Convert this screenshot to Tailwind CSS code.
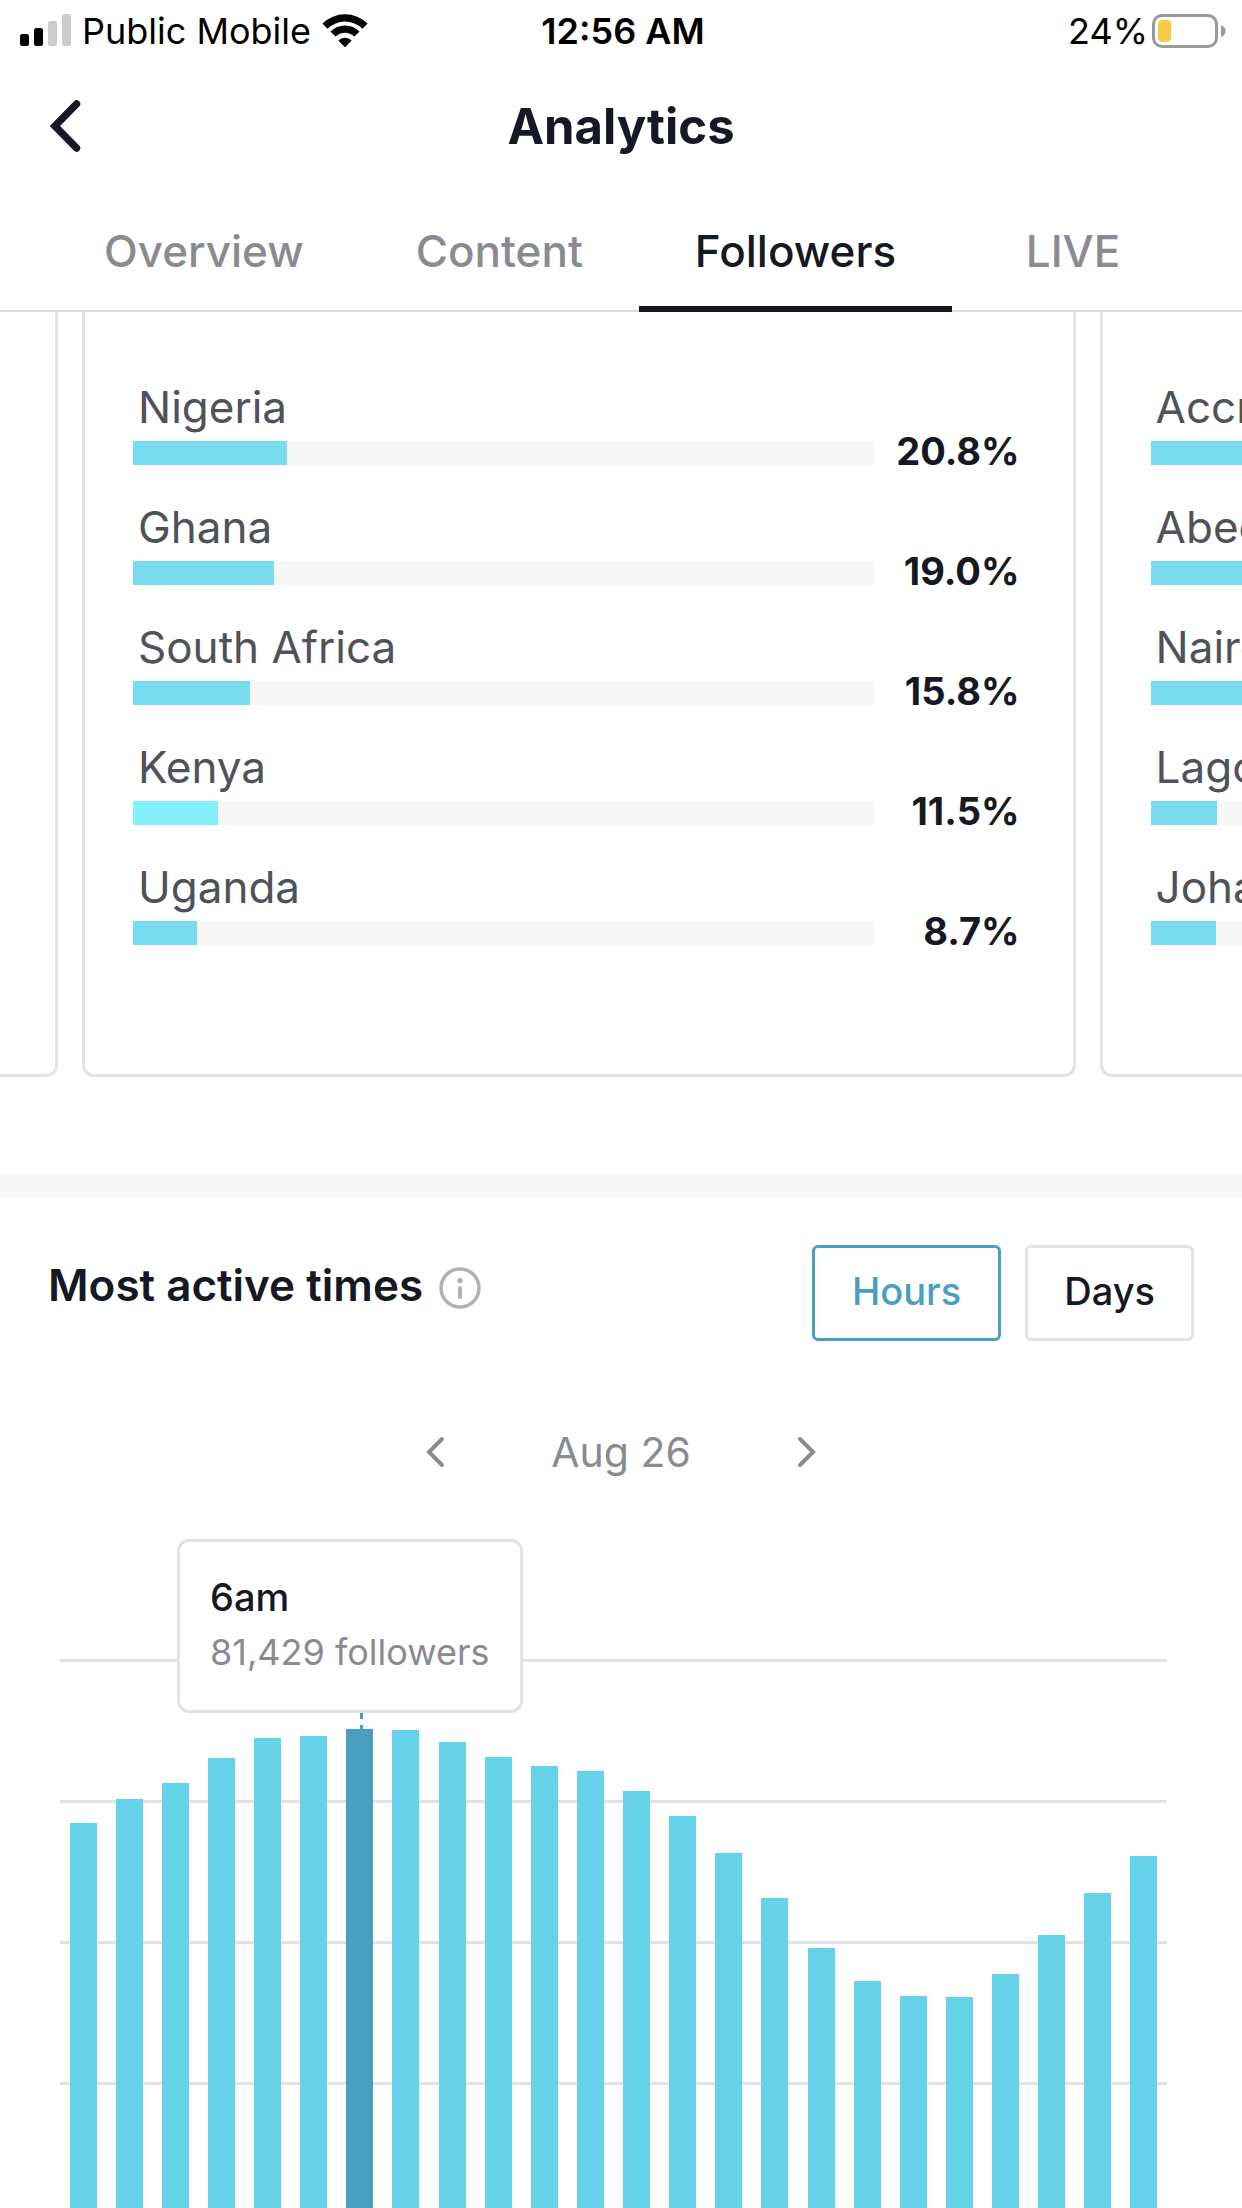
<!DOCTYPE html>
<html lang="en">
<head>
  <meta charset="UTF-8" />
  <meta name="viewport" content="width=device-width, initial-scale=1.0"/>
  <title>Analytics</title>
  <script src="https://cdn.jsdelivr.net/npm/@tailwindcss/browser@4"></script>
</head>
<body class="h-screen overflow-hidden bg-white font-['Inter',sans-serif] text-[#161823]">

  <!-- Status bar -->
  <div class="grid grid-cols-[1fr_auto_1fr] items-center h-[62px] pl-5 pr-4 text-4xl leading-none text-black">
    <div class="flex items-center gap-[11px]">
      <svg class="w-[51px] h-[34px]" viewBox="0 0 51 34">
        <rect x="0" y="20" width="9" height="12" rx="2.5"/>
        <rect x="14" y="14" width="9" height="18" rx="2.5"/>
        <rect x="28" y="7" width="9" height="25" rx="2.5" fill="#ccc"/>
        <rect x="42" y="0" width="9" height="32" rx="2.5" fill="#ccc"/>
      </svg>
      <span>Public Mobile</span>
      <svg class="w-[46px] h-[36px]" viewBox="0 0 46 36">
        <path d="M0.5 10.5 A32 32 0 0 1 45.5 10.5 L40.5 15.7 A25 25 0 0 0 5.5 15.7 Z"/>
        <path d="M8.5 18.5 A20.5 20.5 0 0 1 37.5 18.5 L32.4 23.6 A13.5 13.5 0 0 0 13.6 23.6 Z"/>
        <path d="M16.3 27.5 A9.5 9.5 0 0 1 29.7 27.5 L23.6 33.7 Q23 34.3 22.4 33.7 Z"/>
      </svg>
    </div>
    <div class="font-semibold">12:56 AM</div>
    <div class="flex items-center justify-end gap-1">
      <span>24%</span>
      <svg class="w-[74px] h-[34px]" viewBox="0 0 74 34">
        <rect x="1.5" y="1.5" width="63" height="31" rx="8.5" fill="none" stroke="#999" stroke-width="3"/>
        <rect x="6" y="6" width="13" height="22" rx="4" fill="#f6ce46"/>
        <path d="M69 11 Q73.500 13 73.500 17 Q73.500 21 69 23 Z" fill="#999"/>
      </svg>
    </div>
  </div>

  <!-- Title -->
  <header class="grid grid-cols-[1fr_auto_1fr] items-center h-32 px-12">
    <button type="button" aria-label="Back" class="w-9">
      <svg class="w-9 h-14" viewBox="0 0 36 56" fill="none" stroke="#161823" stroke-width="7.5" stroke-linecap="round">
        <path d="M28.500 6 L7 28 L28.500 50"/>
      </svg>
    </button>
    <h1 class="text-[49px] leading-none font-bold">Analytics</h1>
  </header>

  <nav class="flex h-[122px] px-12 border-b-2 border-[#dcdcdc] text-[44px] font-medium text-[#8a8b91]">
    <button type="button" class="px-14 pt-0.5">Overview</button>
    <button type="button" class="px-14 pt-0.5">Content</button>
    <button type="button" class="px-14 -mb-0.5 pt-1.5 border-b-6 border-[#161823] text-[#161823]">Followers</button>
    <button type="button" class="flex-1 pt-0.5">LIVE</button>
  </nav>

  <!-- Card carousel -->
  <section class="flex gap-6 mb-24 overflow-hidden">
    <div class="w-[58px] shrink-0 border-r-3 border-b-3 border-[#e3e4e5] rounded-br-xl"></div>
    <div id="countries" class="flex flex-col gap-[38px] w-4/5 shrink-0 pt-[71px] pb-[129px] pl-12 pr-[53px] border-3 border-t-0 border-[#e3e4e5] rounded-b-xl"></div>
    <div id="cities" class="flex flex-col gap-[38px] w-4/5 shrink-0 pt-[71px] pb-[129px] pl-12 pr-[53px] border-3 border-t-0 border-[#e3e4e5] rounded-b-xl"></div>
  </section>

  <div class="h-6 bg-[#f7f7f7]"></div>

  <!-- Most active times -->
  <section>
    <div class="flex items-start justify-between px-12 pt-12">
      <div class="flex items-center gap-4 h-20">
        <h2 class="text-[44px] leading-none font-semibold">Most active times</h2>
        <button type="button" aria-label="About active times">
          <svg class="w-[42px] h-12" viewBox="0 0 42 48">
            <circle cx="21" cy="27" r="19" fill="none" stroke="#b0b1b5" stroke-width="3.5"/>
            <circle cx="21" cy="19.5" r="2.7" fill="#b0b1b5"/>
            <path d="M21 27 V36" stroke="#b0b1b5" stroke-width="4" stroke-linecap="round"/>
          </svg>
        </button>
      </div>
      <div class="flex gap-6 text-[38px] leading-none font-medium">
        <button type="button" class="h-24 px-[37px] pb-1 border-3 border-[#4a9fc1] rounded-md text-[#4a9fc1]">Hours</button>
        <button type="button" class="h-24 px-9 pb-1 border-3 border-[#e3e3e3] rounded-md">Days</button>
      </div>
    </div>

    <div class="flex items-center justify-center gap-[106px] h-[60px] mt-[81px] text-[#8a8b91]">
      <button type="button" aria-label="Previous day">
        <svg class="w-5 h-8" viewBox="0 0 20 32" fill="none" stroke="#8a8b91" stroke-width="4" stroke-linecap="round">
          <path d="M17 3 L4 16 L17 29"/>
        </svg>
      </button>
      <span class="text-[41px] leading-none">Aug 26</span>
      <button type="button" aria-label="Next day">
        <svg class="w-5 h-8" viewBox="0 0 20 32" fill="none" stroke="#8a8b91" stroke-width="4" stroke-linecap="round">
          <path d="M3 3 L16 16 L3 29"/>
        </svg>
      </button>
    </div>

    <div class="relative h-[564px] mt-[177px] ml-[60px] mr-[75px]">
      <div class="absolute inset-0 grid grid-rows-4">
        <div class="border-t-3 border-[#e2e2e2]"></div>
        <div class="border-t-3 border-[#e2e2e2]"></div>
        <div class="border-t-3 border-[#e2e2e2]"></div>
        <div class="border-t-3 border-[#e2e2e2]"></div>
      </div>
      <div id="hours" class="relative grid grid-cols-24 items-end justify-items-center h-full"></div>

      <!-- Tooltip for the selected hour -->
      <svg class="absolute left-[300px] top-[54px] w-[3px] h-[18px]" viewBox="0 0 3 18">
        <path d="M1.5 0 V18" stroke="#4a9fc1" stroke-width="3" stroke-dasharray="6 6"/>
      </svg>
      <div class="absolute left-[117px] -top-[120px] px-[30px] pt-7 pb-[30px] bg-white border-3 border-[#e3e3e3] rounded-xl whitespace-nowrap">
        <p class="text-[38px] leading-[55px] font-medium">6am</p>
        <p class="text-4xl leading-[55px] text-[#8a8b91]">81,429 followers</p>
      </div>
    </div>
  </section>

  <script>
    const countries = [
      ['Nigeria', 20.8], ['Ghana', 19.0], ['South Africa', 15.8], ['Kenya', 11.5, true], ['Uganda', 8.7],
    ];
    const cities = [
      ['Accra', 17.3], ['Abeokuta', 15.4], ['Nairobi', 12.9], ['Lagos', 9.0], ['Johannesburg', 8.8],
    ];
    // bar height as a share of the plot area, midnight to 11pm
    const hours = [
      70.9, 75.1, 78.0, 82.4, 86.0, 86.3, 87.6, 87.4, 85.2, 82.6, 81.0, 80.1,
      76.6, 72.1, 65.6, 57.7, 48.7, 42.9, 40.2, 40.1, 44.1, 51.1, 58.5, 65.1,
    ];

    const row = ([name, pct, light]) => `
      <div>
        <p class="pl-[5px] text-[44px] leading-[48px] text-[#50525a]">${name}</p>
        <div class="flex items-end mt-2.5">
          <div class="flex-1 h-6 bg-[#f7f7f7]">
            <div class="h-full ${light ? 'bg-[#84f0fe]' : 'bg-[#78dbee]'}" style="width:${pct}%"></div>
          </div>
          <span class="w-[146px] text-right text-[38px] leading-7 -mt-1 font-bold">${pct.toFixed(1)}%</span>
        </div>
      </div>`;

    document.getElementById('countries').innerHTML = countries.map(row).join('');
    document.getElementById('cities').innerHTML = cities.map(row).join('');
    document.getElementById('hours').innerHTML = hours.map((h, i) =>
      `<div class="w-[27px] ${i === 6 ? 'bg-[#4a9fc1]' : 'bg-[#65d2e9]'}" style="height:${h}%"></div>`
    ).join('');
  </script>
</body>
</html>
